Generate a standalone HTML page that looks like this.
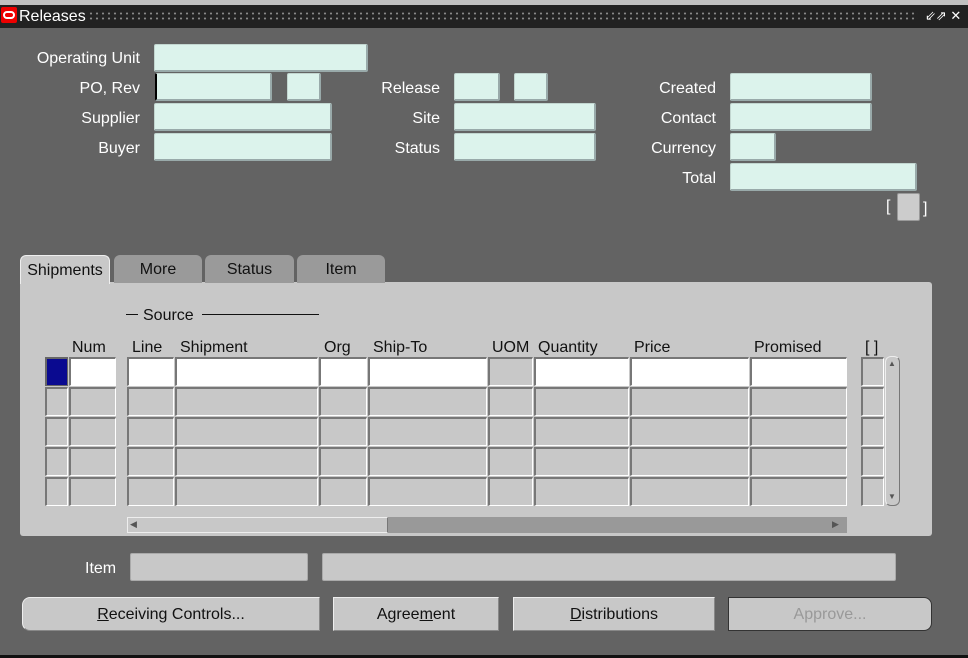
<!DOCTYPE html>
<html><head><style>
*{box-sizing:border-box;margin:0;padding:0}
body{width:968px;height:658px;background:#636363;font-family:"Liberation Sans",sans-serif;font-size:16px;position:relative;overflow:hidden}
.a{position:absolute}
.lbl{position:absolute;color:#fff;text-align:right;white-space:nowrap}
.f{position:absolute;background:#dcf3ec;border:1px solid #c2d6d0;border-right:2px solid #9aa;border-bottom:2px solid #9aa;border-radius:2px}
.tab{position:absolute;top:255px;height:28px;background:#9a9a9a;border-radius:6px 6px 0 0;text-align:center;line-height:30px;color:#111}
.c{position:absolute;background:#c8c8c8;border-left:2px solid #777;border-top:2px solid #777;border-right:1px solid #fff;border-bottom:1px solid #fff}
.w{background:#fff}
.h{position:absolute;top:339px;color:#111}
.btn{position:absolute;top:597px;height:34px;background:#c8c8c8;border:1px solid #eee;border-right-color:#888;border-bottom-color:#888;text-align:center;line-height:34px;color:#111}
</style></head><body>
<div class="a" style="left:0;top:0;width:968px;height:5px;background:#c0c0c0"></div>
<div class="a" style="left:0;top:5px;width:968px;height:23px;background:#222"></div>
<div class="a" style="left:1px;top:7px;width:16px;height:16px;background:#e00;border-radius:2px"><div style="margin:4px 2px;height:8px;border:2px solid #fff;border-radius:4px"></div></div>
<div class="a" style="left:19px;top:8px;color:#fff">Releases</div>
<div class="a" style="left:88px;top:11px;width:830px;height:10px;background-image:radial-gradient(#888 1px,transparent 1.3px);background-size:6px 5px"></div>
<div class="a" style="left:925px;top:8px;color:#fff;font-size:13px">⇙⇗ ✕</div>

<div class="lbl" style="right:828px;top:50px">Operating Unit</div>
<div class="f" style="left:154px;top:44px;width:214px;height:28px"></div>
<div class="lbl" style="right:828px;top:80px">PO, Rev</div>
<div class="f" style="left:155px;top:73px;width:117px;height:28px;border-left:2px solid #000"></div>
<div class="f" style="left:287px;top:73px;width:34px;height:28px"></div>
<div class="lbl" style="right:828px;top:110px">Supplier</div>
<div class="f" style="left:154px;top:103px;width:178px;height:28px"></div>
<div class="lbl" style="right:828px;top:140px">Buyer</div>
<div class="f" style="left:154px;top:133px;width:178px;height:28px"></div>

<div class="lbl" style="right:528px;top:80px">Release</div>
<div class="f" style="left:454px;top:73px;width:46px;height:28px"></div>
<div class="f" style="left:514px;top:73px;width:34px;height:28px"></div>
<div class="lbl" style="right:528px;top:110px">Site</div>
<div class="f" style="left:454px;top:103px;width:142px;height:28px"></div>
<div class="lbl" style="right:528px;top:140px">Status</div>
<div class="f" style="left:454px;top:133px;width:142px;height:28px"></div>

<div class="lbl" style="right:252px;top:80px">Created</div>
<div class="f" style="left:730px;top:73px;width:142px;height:28px"></div>
<div class="lbl" style="right:252px;top:110px">Contact</div>
<div class="f" style="left:730px;top:103px;width:142px;height:28px"></div>
<div class="lbl" style="right:252px;top:140px">Currency</div>
<div class="f" style="left:730px;top:133px;width:46px;height:28px"></div>
<div class="lbl" style="right:252px;top:170px">Total</div>
<div class="f" style="left:730px;top:163px;width:187px;height:28px"></div>
<div class="lbl" style="left:886px;top:198px">[</div>
<div class="a" style="left:897px;top:193px;width:23px;height:28px;background:#ccc;border:1px solid #999;border-radius:2px"></div>
<div class="lbl" style="left:923px;top:200px">]</div>

<div class="a" style="left:20px;top:282px;width:912px;height:254px;background:#c8c8c8;border-radius:0 3px 3px 3px"></div>
<div class="tab" style="left:20px;width:90px;height:29px;background:#c8c8c8;border:1px solid #eee;border-bottom:none">Shipments</div>
<div class="tab" style="left:114px;width:88px">More</div>
<div class="tab" style="left:205px;width:89px">Status</div>
<div class="tab" style="left:297px;width:88px">Item</div>

<div class="a" style="left:126px;top:314px;width:12px;border-top:1px solid #111"></div>
<div class="a" style="left:143px;top:307px;color:#111">Source</div>
<div class="a" style="left:202px;top:314px;width:117px;border-top:1px solid #111"></div>

<div class="h" style="left:72px">Num</div>
<div class="h" style="left:132px">Line</div>
<div class="h" style="left:180px">Shipment</div>
<div class="h" style="left:324px">Org</div>
<div class="h" style="left:373px">Ship-To</div>
<div class="h" style="left:492px">UOM</div>
<div class="h" style="left:538px">Quantity</div>
<div class="h" style="left:634px">Price</div>
<div class="h" style="left:754px">Promised</div>
<div class="h" style="left:865px">[ ]</div>

<div id="g"></div>
<script>
var cols=[[69,47],[127,47],[175,143],[319,48],[368,119],[488,45],[534,95],[630,119],[750,97]];
var h='';
for(var r=0;r<5;r++){var y=357+r*30;
h+='<div class="c" style="left:45px;top:'+y+'px;width:23px;height:29px;'+(r==0?'background:#0a0a90;border-color:#666':'')+'"></div>';
cols.forEach(function(c,i){h+='<div class="c'+(r==0&&i!=5?' w':'')+'" style="left:'+c[0]+'px;top:'+y+'px;width:'+c[1]+'px;height:29px"></div>';});
h+='<div class="c" style="left:861px;top:'+y+'px;width:23px;height:29px"></div>';}
document.getElementById('g').innerHTML=h;
</script>
<div class="a" style="left:885px;top:356px;width:15px;height:150px;border:1px solid #eee;border-right-color:#777;border-bottom-color:#777;border-radius:6px;background:#c8c8c8"></div>
<div class="a" style="left:888px;top:359px;font-size:8px;color:#555">▲</div>
<div class="a" style="left:888px;top:492px;font-size:8px;color:#555">▼</div>
<div class="a" style="left:127px;top:517px;width:720px;height:16px;background:#999"></div>
<div class="a" style="left:127px;top:517px;width:261px;height:16px;background:#c8c8c8;border:1px solid #eee;border-right-color:#777"></div>
<div class="a" style="left:130px;top:519px;font-size:9px;color:#555">◀</div>
<div class="a" style="left:832px;top:519px;font-size:9px;color:#555">▶</div>

<div class="lbl" style="left:85px;top:560px">Item</div>
<div class="a" style="left:130px;top:553px;width:178px;height:28px;background:#c8c8c8;border:1px solid #aaa;border-radius:2px"></div>
<div class="a" style="left:322px;top:553px;width:574px;height:28px;background:#c8c8c8;border:1px solid #aaa;border-radius:2px"></div>

<div class="btn" style="left:22px;width:298px;border-radius:8px 0 0 8px"><u>R</u>eceiving Controls...</div>
<div class="btn" style="left:333px;width:166px">Agree<u>m</u>ent</div>
<div class="btn" style="left:513px;width:202px"><u>D</u>istributions</div>
<div class="btn" style="left:728px;width:204px;color:#999;border:1px solid #333;border-radius:0 8px 8px 0">Approve...</div>
<div class="a" style="left:0;top:655px;width:968px;height:3px;background:#111"></div>
</body></html>
